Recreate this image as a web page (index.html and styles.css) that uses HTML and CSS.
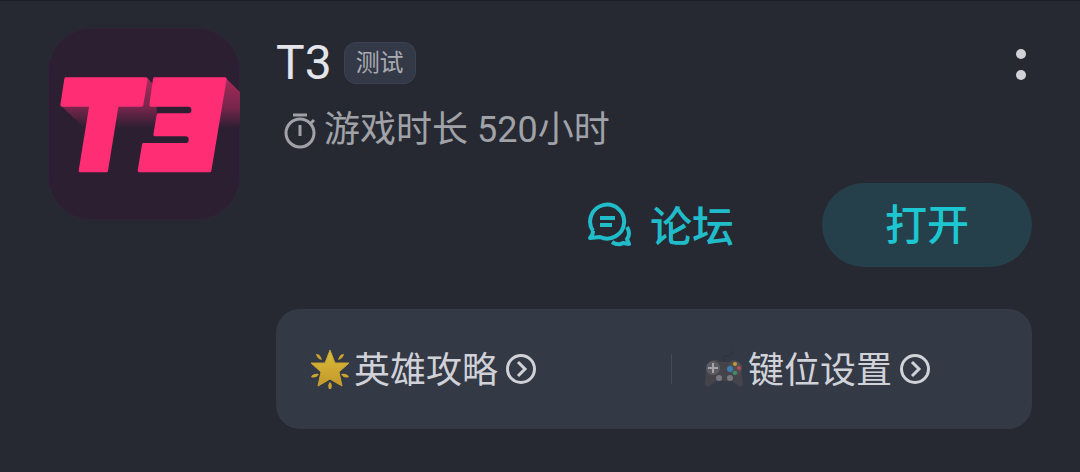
FILE: index.html
```html
<!DOCTYPE html>
<html lang="zh-CN">
<head>
<meta charset="utf-8">
<meta name="viewport" content="width=device-width, initial-scale=1">
<title>T3</title>
<link rel="stylesheet" href="styles.css">
</head>
<body>
<main class="game">
  <svg class="game-logo" viewBox="24 24 576 576" role="img" aria-label="T3">
    <defs>
      <linearGradient id="shade" gradientUnits="userSpaceOnUse" x1="0" y1="175" x2="0" y2="322">
        <stop offset="0" stop-color="#a52b58"/>
        <stop offset=".6" stop-color="#77254b"/>
        <stop offset="1" stop-color="#2d1f32"/>
      </linearGradient>
    </defs>
    <rect x="25" y="25" width="574" height="574" rx="128" fill="#2d1f32" stroke="#30253a" stroke-width="3"/>
    <path fill="url(#shade)" d="M62 256 130 322H350V205L322 174 300 255ZM556 173 600 216V322H520Z"/>
    <path fill="#2d1f32" d="M324 172H340L334 186Z"/>
    <g fill="#ff2e74" stroke="#ff2e74" stroke-width="10" stroke-linejoin="round">
      <path d="M78 177H318L305 255H231L199 452H121L153 255H66Z"/>
      <path d="M344 177H555L509 452H298L311 374H436C456 374 456 344 436 344H345L355 285H445C464 285 464 255 445 255H333Z"/>
    </g>
  </svg>

  <div class="game-body">
    <header class="title-row">
      <h1 class="title">T3</h1>
      <span class="tag">测试</span>
      <button class="more" type="button" aria-label="更多">
        <svg class="more-icon" viewBox="0 0 22 32" fill="#d0d2d7"><circle cx="11" cy="6" r="5"/><circle cx="11" cy="27" r="5"/></svg>
      </button>
    </header>

    <p class="playtime">
      <svg class="timer-icon" viewBox="0 0 32 38" fill="none" stroke="#a0a2a8" stroke-width="3" aria-hidden="true">
        <circle cx="16" cy="22" r="14"/><path d="M9 4H23M16 14V25M26 13 30 9"/>
      </svg>
      <span>游戏时长 520小时</span>
    </p>

    <div class="actions">
      <a class="forum" href="#forum">
        <svg class="forum-icon" viewBox="0 0 46 46" fill="none" stroke="#21bcc9" stroke-width="4" aria-hidden="true">
          <path d="M7 29A17 17 0 1 1 14 35L4 36Q7 33 7 29" stroke-linejoin="round"/>
          <path d="M14 16H29M14 23H26"/>
          <path d="M41 25Q45 32 41 37L43 42 37 41Q32 44 26 40" stroke-linejoin="round"/>
        </svg>
        <span class="forum-text">论坛</span>
      </a>
      <button class="open" type="button">打开</button>
    </div>

    <nav class="links">
      <a class="link" href="#guide">
        <svg class="link-picture" viewBox="0 0 40 40" aria-hidden="true">
          <defs><linearGradient id="gold" x1="0" y1="0" x2="0" y2="1"><stop offset="0" stop-color="#d9bd39"/><stop offset="1" stop-color="#c4982c"/></linearGradient></defs>
          <path fill="url(#gold)" stroke="#c9a32f" stroke-linejoin="round" d="M20 1 25 14 39 14 29 23 32 37 20 30 8 37 11 23 1 14 15 14Z"/>
          <path fill="#caa42f" d="M6 5Q10 4 12 11 7 10 6 5ZM34 5Q30 4 28 11 33 10 34 5ZM1 28Q3 24 9 25 6 30 1 28ZM39 28Q37 24 31 25 34 30 39 28ZM20 33Q23 36 21 40H19Q17 36 20 33Z"/>
        </svg>
        <span class="link-text">英雄攻略</span>
        <svg class="arrow" viewBox="0 0 30 30" fill="none" stroke="#d0d2d8" stroke-width="3" aria-hidden="true"><circle cx="15" cy="15" r="13.5"/><path d="M12 8 19 15 12 22"/></svg>
      </a>
      <a class="link link-divided" href="#keys">
        <svg class="link-picture" viewBox="0 0 40 40" aria-hidden="true">
          <path fill="none" stroke="#303039" stroke-width="1" d="M20 12Q18 7 23 7T28 2"/>
          <path fill="#45444a" d="M9 11Q13 10 16 13H25Q29 9 34 13 37 17 39 34 39 39 35 37L28 32H12L5 37Q1 39 1 34 2 17 5 13Z"/>
          <circle cx="9" cy="19" r="7" fill="#5b5b61"/><circle cx="31" cy="19" r="7" fill="#504e52"/>
          <path stroke="#a4a5aa" stroke-width="2" d="M9 14V24M4 19H14"/>
          <circle cx="15" cy="29" r="3" fill="#77777e"/><circle cx="26" cy="29" r="3" fill="#77777e"/>
          <circle cx="31" cy="15" r="2" fill="#c19a3a"/><circle cx="26" cy="20" r="3" fill="#397eae"/><circle cx="35" cy="19" r="2" fill="#b34d4d"/><circle cx="31" cy="24" r="2" fill="#42906c"/>
        </svg>
        <span class="link-text">键位设置</span>
        <svg class="arrow" viewBox="0 0 30 30" fill="none" stroke="#d0d2d8" stroke-width="3" aria-hidden="true"><circle cx="15" cy="15" r="13.5"/><path d="M12 8 19 15 12 22"/></svg>
      </a>
    </nav>
  </div>
</main>
</body>
</html>
```
FILE: styles.css
```css
* {
  box-sizing: border-box;
}

body {
  margin: 0;
  background: #262932;
  color: #d0d2d8;
  font-family: Roboto, "Noto Sans CJK SC", sans-serif;
}

.game {
  display: flex;
  align-items: flex-start;
  gap: 36px;
  padding: 27px 48px 42px;
  border-top: 1px solid #1e2029;
}

.game-logo {
  flex: none;
  width: 192px;
  height: 192px;
}

.game-body {
  flex: 1;
  min-width: 0;
  padding-top: 9px;
}

.title-row {
  display: flex;
  align-items: center;
  gap: 12px;
}

.title {
  margin: 0;
  color: #e4e5ea;
  font-size: 48px;
  font-weight: 400;
  line-height: 52px;
}

.tag {
  padding: 0 11px;
  border: 1px solid #3c4350;
  border-radius: 12px;
  background: #333946;
  color: #a9abb2;
  font-size: 24px;
  line-height: 40px;
}

.more {
  margin-left: auto;
  padding: 2px 0 0;
  border: 0;
  background: none;
}

.more-icon {
  display: block;
  width: 22px;
  height: 32px;
}

.playtime {
  display: flex;
  align-items: center;
  gap: 8px;
  margin: 15px 0 27px;
  padding-left: 8px;
  color: #a0a2a8;
  font-size: 36px;
  line-height: 52px;
}

.timer-icon {
  width: 32px;
  height: 38px;
}

.actions {
  display: flex;
  justify-content: flex-end;
  align-items: center;
  gap: 88px;
  font-size: 42px;
  font-weight: 500;
}

.forum {
  display: flex;
  align-items: center;
  gap: 18px;
  color: #21bcc9;
  text-decoration: none;
}

.forum-icon {
  width: 46px;
  height: 46px;
}

.forum-text {
  padding-bottom: 4px;
}

.open {
  width: 210px;
  height: 84px;
  padding: 0 0 8px;
  border: 0;
  border-radius: 42px;
  background: #26404b;
  color: #1dc7d1;
  font: inherit;
}

.links {
  display: grid;
  grid-template-columns: 1fr 1fr;
  align-items: center;
  margin-top: 42px;
  padding: 34px 0 34px 34px;
  border-radius: 24px;
  background: #343946;
}

.link {
  display: flex;
  align-items: center;
  color: inherit;
  font-size: 36px;
  line-height: 48px;
  text-decoration: none;
}

.link-divided::before {
  content: "";
  width: 1px;
  height: 30px;
  margin-right: 32px;
  background: #454a57;
}

.link-picture {
  width: 40px;
  height: 40px;
  margin-right: 4px;
}

.link-text {
  padding-top: 4px;
}

.arrow {
  width: 30px;
  height: 30px;
  margin-left: 8px;
}
```
